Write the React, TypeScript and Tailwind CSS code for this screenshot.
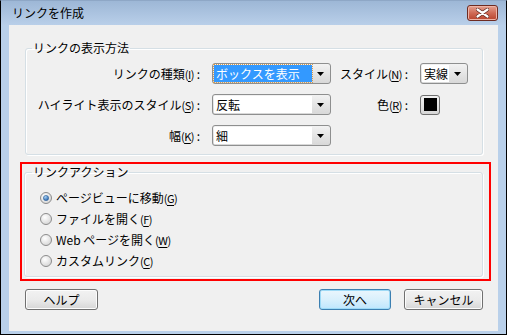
const font = { fontFamily: '"Noto Sans CJK JP", "Noto Sans", sans-serif' };

/**
 * Access key, e.g. (I) with the letter underlined
 */
function Key({ k }: { k: string }) {
  return (
    <span className="text-[11px] tracking-[-0.5px]">
      (<span className="underline underline-offset-2">{k}</span>)
    </span>
  );
}

function Arrow() {
  return (
    <svg width="7" height="4" viewBox="0 0 7 4">
      <path d="M0 0h7L3.5 4z" fill="#000" />
    </svg>
  );
}

/**
 * Win7 style drop-down list
 */
function Select({ value, width, selected = false }: { value: string; width: string; selected?: boolean }) {
  return (
    <div className={`${width} h-[21px] flex items-stretch rounded-[3px] border border-[#8e8f8f] bg-gradient-to-b from-[#f2f2f2] to-[#d8d8d8] p-[1px]`}>
      <div
        className={`flex-1 flex items-center pl-[2px] text-[12px] leading-[16px] ${
          selected ? 'bg-[#3399ff] text-white outline outline-1 outline-dotted outline-[#d79a4a]' : 'bg-white text-black'
        }`}
      >
        {value}
      </div>
      <div className="w-[17px] flex items-center justify-center">
        <Arrow />
      </div>
    </div>
  );
}

function Radio({ checked = false, children }: { checked?: boolean; children: React.ReactNode }) {
  return (
    <div className="h-[21px] flex items-center gap-[4px]">
      <svg width="12" height="12" viewBox="0 0 12 12">
        <defs>
          <radialGradient id={checked ? 'rc' : 'ru'} cx="0.4" cy="0.35" r="0.7">
            <stop offset="0" stopColor="#ffffff" />
            <stop offset="1" stopColor="#d4d4d4" />
          </radialGradient>
          <radialGradient id="dot" cx="0.35" cy="0.3" r="0.8">
            <stop offset="0" stopColor="#a9d3f5" />
            <stop offset="1" stopColor="#1d5aa5" />
          </radialGradient>
        </defs>
        <circle cx="6" cy="6" r="5.5" fill={`url(#${checked ? 'rc' : 'ru'})`} stroke="#8c8c8c" strokeWidth="1" />
        {checked && <circle cx="6" cy="6" r="2.6" fill="url(#dot)" stroke="#2c5f99" strokeWidth="0.6" />}
      </svg>
      <span className="text-[12px] leading-[16px] text-black">{children}</span>
    </div>
  );
}

function Button({ width, primary = false, children }: { width: string; primary?: boolean; children: React.ReactNode }) {
  return (
    <button
      className={`${width} h-[21px] rounded-[3px] border text-[12px] leading-[16px] text-black flex items-center justify-center ${
        primary
          ? 'border-[#3c7fb1] bg-gradient-to-b from-[#eaf6fd] via-[#d9f0fc] to-[#bee6fd] shadow-[inset_0_0_0_1px_#9ddaf6]'
          : 'border-[#707070] bg-gradient-to-b from-[#f2f2f2] via-[#ebebeb] to-[#d6d6d6] shadow-[inset_0_0_0_1px_#fcfcfc]'
      }`}
    >
      {children}
    </button>
  );
}

export default function App() {
  return (
    <div style={font} className="w-[507px] h-[335px] flex flex-col bg-[#b9d0ea] border-x border-b border-black border-t border-t-[#8ea7c6]">
      {/* title bar */}
      <div className="h-[24px] flex items-center pl-[11px] pr-[8px] bg-gradient-to-b from-[#9db7d6] to-[#b9cfe9]">
        <span className="text-[12px] leading-[16px] text-black">リンクを作成</span>
        <div className="ml-auto w-[31px] h-[16px] rounded-[3px] border border-[#6e2b21] bg-gradient-to-b from-[#e4a191] via-[#cf6a55] to-[#b8432c] flex items-center justify-center shadow-[inset_0_0_0_1px_#eeb4a7]">
          <svg width="13" height="10" viewBox="0 0 13 10">
            <path d="M1.5 1.5l10 7M11.5 1.5l-10 7" stroke="#5a231b" strokeWidth="3.6" strokeLinecap="round" />
            <path d="M1.5 1.5l10 7M11.5 1.5l-10 7" stroke="#ffffff" strokeWidth="2.2" strokeLinecap="round" />
          </svg>
        </div>
      </div>

      {/* client area */}
      <div className="flex-1 mx-[8px] mb-[3px] bg-[#f0f0f0] flex flex-col">
        <fieldset className="ml-[16px] mt-[15px] w-[458px] h-[115px] border border-[#d5dfe5] rounded-[3px] pl-[6px] shadow-[inset_1px_1px_0_#ffffff,1px_1px_0_#ffffff]">
          <legend className="px-[1px] text-[12px] leading-[16px] text-black">リンクの表示方法</legend>
          <div className="pt-[7px] grid grid-cols-[180px_119px_89px_48px] gap-y-[10px] items-center text-[12px] leading-[16px] text-black whitespace-nowrap">
            <span className="text-right pr-[12px]">リンクの種類<Key k="I" /> :</span>
            <Select value="ボックスを表示" width="w-[119px]" selected />
            <span className="text-right pr-[12px]">スタイル<Key k="N" /> :</span>
            <Select value="実線" width="w-[48px]" />

            <span className="text-right pr-[12px]">ハイライト表示のスタイル<Key k="S" /> :</span>
            <Select value="反転" width="w-[119px]" />
            <span className="text-right pr-[12px]">色<Key k="R" /> :</span>
            <div className="w-[20px] h-[20px] rounded-[3px] border border-[#707070] bg-gradient-to-b from-[#f2f2f2] to-[#d6d6d6] flex items-center justify-center">
              <div className="w-[13px] h-[13px] bg-black" />
            </div>

            <span className="text-right pr-[12px]">幅<Key k="K" /> :</span>
            <Select value="細" width="w-[119px]" />
          </div>
        </fieldset>

        {/* highlighted group */}
        <div className="ml-[11px] mt-[7px] w-[471px] h-[119px] border-2 border-[#ff0000]">
          <fieldset className="ml-[2px] w-[459px] h-[113px] border border-[#d5dfe5] rounded-[3px] pl-[7px] shadow-[inset_1px_1px_0_#ffffff,1px_1px_0_#ffffff]">
            <legend className="px-[1px] text-[12px] leading-[16px] text-black">リンクアクション</legend>
            <div className="pt-[7px] pl-[8px] flex flex-col">
              <Radio checked>ページビューに移動<Key k="G" /></Radio>
              <Radio>ファイルを開く<Key k="F" /></Radio>
              <Radio>Web ページを開く<Key k="W" /></Radio>
              <Radio>カスタムリンク<Key k="C" /></Radio>
            </div>
          </fieldset>
        </div>

        {/* buttons */}
        <div className="mt-[8px] flex items-center pl-[16px] pr-[15px]">
          <Button width="w-[73px]">ヘルプ</Button>
          <div className="ml-auto flex gap-[13px]">
            <Button width="w-[72px]" primary>次へ</Button>
            <Button width="w-[79px]">キャンセル</Button>
          </div>
        </div>
      </div>
    </div>
  );
}
